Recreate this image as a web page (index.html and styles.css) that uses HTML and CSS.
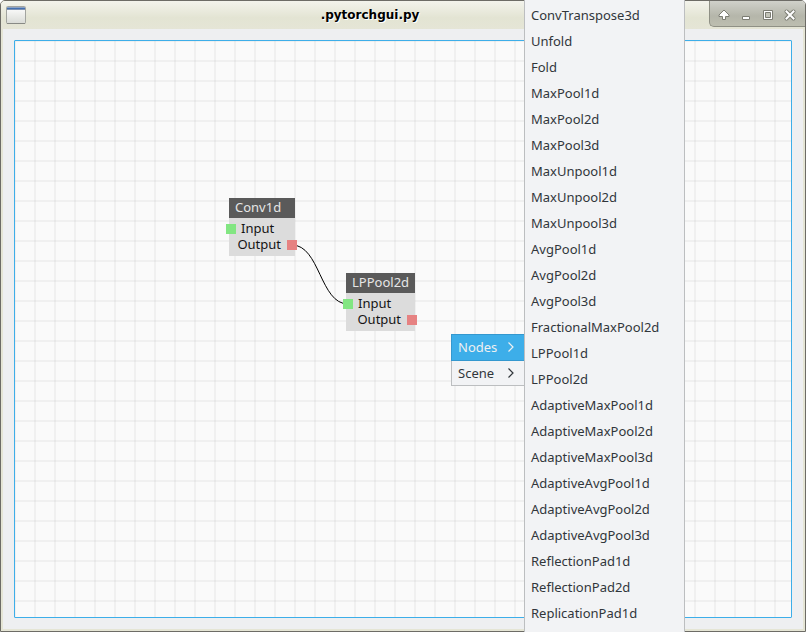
FILE: index.html
```html
<!DOCTYPE html>
<html lang="en">
<head>
<meta charset="utf-8">
<title>.pytorchgui.py</title>
<link rel="stylesheet" href="styles.css">
</head>
<body>
<div class="window">
  <header class="titlebar">
    <svg class="app-icon" width="20" height="18" viewBox="0 0 20 18" aria-hidden="true">
      <defs><linearGradient id="pane" x1="0" y1="0" x2="0" y2="1"><stop offset="0" stop-color="#fff"/><stop offset="1" stop-color="#d9dbd6"/></linearGradient></defs>
      <rect x=".5" y=".5" width="19" height="17" rx="1" fill="url(#pane)" stroke="#a2a49f"/>
      <path d="M1 1h18v1H1z" fill="#8ea3c4"/>
      <path d="M1 2h18v1H1z" fill="#4370b0"/>
      <path d="M1 3h18v1H1z" fill="#7d92b5"/>
      <path d="M1 17.5h18" stroke="#888a85"/>
    </svg>
    <h1 class="title">.pytorchgui.py</h1>
    <div class="controls">
      <button class="control" aria-label="Shade"><svg width="14" height="14" viewBox="0 0 14 14"><path d="M7 2 12 7V8.5H8.5V11.5H5.5V8.5H2V7Z" fill="#fff" stroke="#7c7d73" stroke-linejoin="round"/></svg></button>
      <button class="control" aria-label="Minimize"><svg width="14" height="14" viewBox="0 0 14 14"><path d="M3.5 8.5h7v3h-7z" fill="#fff" stroke="#7c7d73"/></svg></button>
      <button class="control" aria-label="Maximize"><svg width="14" height="14" viewBox="0 0 14 14"><path d="M2.5 2.5h9v9h-9z" fill="#fff" stroke="#7c7d73"/><path d="M4.5 4.5h5v5h-5z" fill="#c3c4b8" stroke="#7c7d73"/></svg></button>
      <button class="control" aria-label="Close"><svg width="14" height="14" viewBox="0 0 14 14"><path d="M3.5 3.5l7 7M10.5 3.5l-7 7" fill="none" stroke="#7c7d73" stroke-width="4" stroke-linecap="round"/><path d="M3.5 3.5l7 7M10.5 3.5l-7 7" fill="none" stroke="#fff" stroke-width="2" stroke-linecap="square"/></svg></button>
    </div>
  </header>
  <main class="content">
    <div class="canvas">
      <svg class="wires" width="100%" height="100%" aria-hidden="true"><path d="M277 204C305 204 305 263 333 263" fill="none" stroke="#000"/></svg>
      <section class="node node-conv">
        <h2 class="node-title">Conv1d</h2>
        <div class="ports">
          <div class="port port-in">Input</div>
          <div class="port port-out">Output</div>
        </div>
      </section>
      <section class="node node-pool">
        <h2 class="node-title">LPPool2d</h2>
        <div class="ports">
          <div class="port port-in">Input</div>
          <div class="port port-out">Output</div>
        </div>
      </section>
    </div>
  </main>
</div>
<nav class="menu context-menu" aria-label="Context menu">
  <button class="item parent active">Nodes<svg width="8" height="10" viewBox="0 0 8 10"><path d="M1.5 .5L6 5 1.5 9.500" fill="none" stroke="currentColor" stroke-width="1.200"/></svg></button>
  <button class="item parent">Scene<svg width="8" height="10" viewBox="0 0 8 10"><path d="M1.5 .5L6 5 1.5 9.500" fill="none" stroke="currentColor" stroke-width="1.200"/></svg></button>
</nav>
<nav class="menu submenu" aria-label="Nodes">
  <button class="item">ConvTranspose3d</button>
  <button class="item">Unfold</button>
  <button class="item">Fold</button>
  <button class="item">MaxPool1d</button>
  <button class="item">MaxPool2d</button>
  <button class="item">MaxPool3d</button>
  <button class="item">MaxUnpool1d</button>
  <button class="item">MaxUnpool2d</button>
  <button class="item">MaxUnpool3d</button>
  <button class="item">AvgPool1d</button>
  <button class="item">AvgPool2d</button>
  <button class="item">AvgPool3d</button>
  <button class="item">FractionalMaxPool2d</button>
  <button class="item">LPPool1d</button>
  <button class="item">LPPool2d</button>
  <button class="item">AdaptiveMaxPool1d</button>
  <button class="item">AdaptiveMaxPool2d</button>
  <button class="item">AdaptiveMaxPool3d</button>
  <button class="item">AdaptiveAvgPool1d</button>
  <button class="item">AdaptiveAvgPool2d</button>
  <button class="item">AdaptiveAvgPool3d</button>
  <button class="item">ReflectionPad1d</button>
  <button class="item">ReflectionPad2d</button>
  <button class="item">ReplicationPad1d</button>
</nav>
</body>
</html>
```

FILE: styles.css
```css
* {
  box-sizing: border-box;
}

body {
  margin: 0;
  position: relative;
  height: 100vh;
  overflow: hidden;
  background: #fff;
  font: 13px/16px "Noto Sans", sans-serif;
  color: #31363b;
}

button {
  margin: 0;
  padding: 0;
  border: 0;
  background: none;
  font: inherit;
  color: inherit;
}

.window {
  display: flex;
  flex-direction: column;
  height: 100%;
  border: 1px solid #6d6c66;
  border-radius: 5px 5px 0 0;
  background: #e5e5d5;
  overflow: hidden;
}

.titlebar {
  display: flex;
  flex: none;
  height: 28px;
  padding-left: 5px;
  background: linear-gradient(#f3f3ec, #e3e4d3 60%, #e5e5d6);
}

.app-icon {
  flex: none;
  margin-top: 5px;
}

.title {
  flex: 1;
  margin: 0;
  padding-left: 5px;
  font: bold 12px/28px "DejaVu Sans", sans-serif;
  text-align: center;
  color: #000;
  text-shadow: 1px 1px 0 #fff;
}

.controls {
  display: flex;
  align-items: center;
  gap: 8px;
  height: 26px;
  padding: 2px 8px 0 7px;
  border: solid #8f9085;
  border-width: 0 0 1px 1px;
  border-bottom-left-radius: 5px;
  background: linear-gradient(#d0d1ca, #b5b6aa 60%, #bdbeb0);
}

.control {
  width: 14px;
  height: 14px;
}

.control svg {
  display: block;
}

.content {
  display: flex;
  flex: 1;
  margin: 0 2px 2px;
  padding: 11px;
  background: #eeeff1;
}

.canvas {
  position: relative;
  flex: 1;
  border: 1px solid #3daee9;
  border-radius: 1px;
  background-color: #fafafa;
  background-image:
    linear-gradient(90deg, rgba(0, 0, 0, 0.04) 0 2px, transparent 2px 20px),
    linear-gradient(rgba(0, 0, 0, 0.04) 0 2px, transparent 2px 20px);
  background-size: 20px 20px;
  background-position: 19px 19px;
}

.wires {
  position: absolute;
  inset: 0;
}

.node {
  position: absolute;
  min-width: 66px;
  background: #dcdcdc;
  color: #141414;
}

.node-conv {
  left: 214px;
  top: 157px;
}

.node-pool {
  left: 331px;
  top: 232px;
}

.node-title {
  margin: 0;
  padding: 0 6px 2px;
  background: #5a5a5a;
  font-size: 13px;
  font-weight: 400;
  line-height: 18px;
  color: #e6e6e6;
}

.ports {
  padding: 2px 0 4px;
}

.port {
  display: flex;
  gap: 5px;
  height: 16px;
}

.port::before,
.port::after {
  width: 10px;
  height: 10px;
  margin-top: 4px;
}

.port-in::before {
  content: "";
  margin-left: -3px;
  background: #82e682;
}

.port-out {
  justify-content: flex-end;
  gap: 6px;
}

.port-out::after {
  content: "";
  margin-right: -2px;
  background: #e68282;
}

.menu {
  position: absolute;
  display: flex;
  flex-direction: column;
  border: 1px solid #bcbec0;
  background: #f2f3f5;
}

.context-menu {
  left: 451px;
  top: 334px;
  width: 74px;
}

.submenu {
  left: 524px;
  top: 0;
  bottom: 0;
  width: 161px;
  padding-top: 2px;
  border-width: 0 1px;
  overflow: hidden;
}

.item {
  flex: none;
  height: 26px;
  padding: 0 6px;
  text-align: left;
}

.parent {
  display: flex;
  align-items: center;
  justify-content: space-between;
  padding-right: 9px;
}

.context-menu .item {
  height: 25px;
}

.context-menu .active {
  padding-bottom: 1px;
  background: #3daee9;
  color: #eff0f1;
  outline: 1px solid #3498cf;
}
```
